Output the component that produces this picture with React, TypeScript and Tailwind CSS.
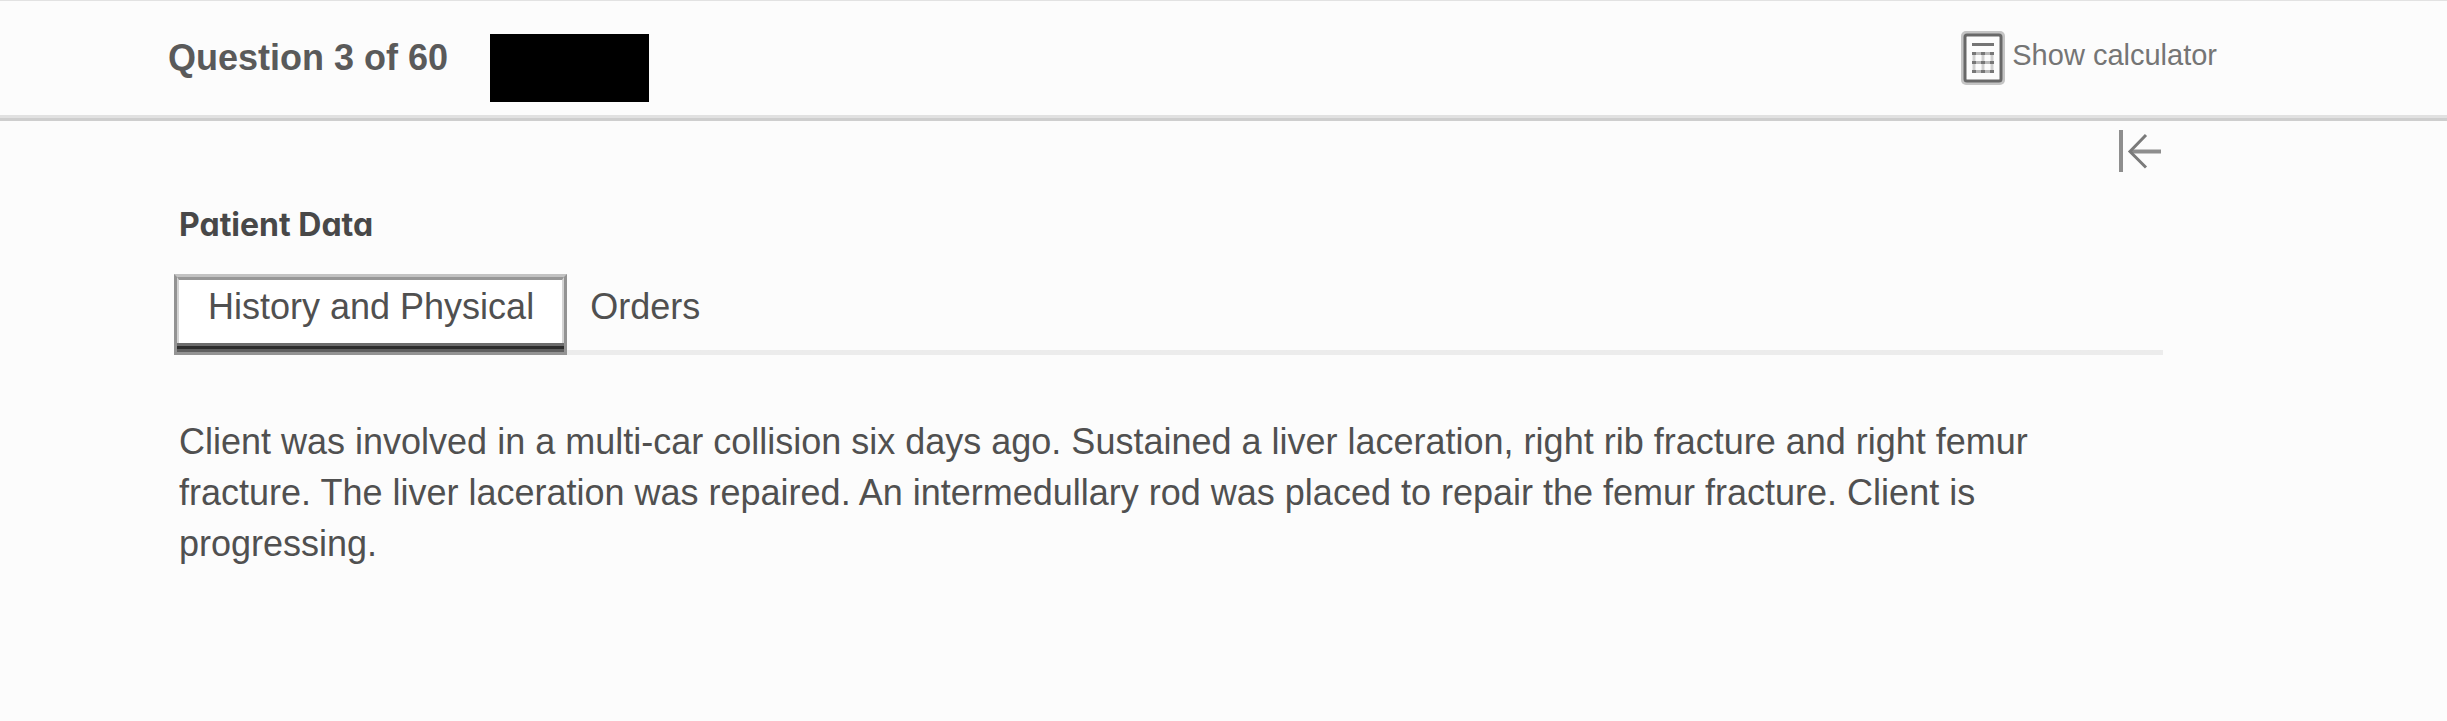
import React, { useState } from 'react';

const tabs = [
  {
    id: 'history',
    label: 'History and Physical',
    content:
      'Client was involved in a multi-car collision six days ago. Sustained a liver laceration, right rib fracture and right femur fracture. The liver laceration was repaired. An intermedullary rod was placed to repair the femur fracture. Client is progressing.',
  },
  { id: 'orders', label: 'Orders', content: '' },
];

const CalculatorIcon: React.FC = () => (
  <svg className="w-11 h-[54px]" viewBox="0 0 44 54" fill="none" aria-hidden="true">
    <rect x="0" y="0" width="44" height="54" rx="5" fill="#c4c4c4" />
    <rect x="4" y="4" width="36" height="46" rx="2" fill="#fcfcfc" stroke="#686868" strokeWidth="3" />
    <path d="M11 13.5h22" stroke="#757575" strokeWidth="3" />
    <path d="M13 21v21M22 21v21M31 21v21" stroke="#cfcfcf" strokeWidth="3" />
    <path d="M11 22.5h22M11 31.5h22M11 40.5h22" stroke="#b8b8b8" strokeWidth="3" />
    <path d="M11 22.5h4m5 0h4m5 0h4M11 31.5h4m5 0h4m5 0h4M11 40.5h4m5 0h4m5 0h4" stroke="#777" strokeWidth="3" />
  </svg>
);

const CollapseIcon: React.FC = () => (
  <svg className="w-[46px] h-11" viewBox="0 0 46 44" fill="none" aria-hidden="true">
    <path d="M4 1v42" stroke="#8e8e8e" strokeWidth="4" />
    <path d="M14 22.5h30" stroke="#8e8e8e" strokeWidth="4" />
    <path d="M29 6L13 22.5l16 16" stroke="#7a7a7a" strokeWidth="3" />
  </svg>
);

export default function App() {
  const [active, setActive] = useState('history');
  const current = tabs.find((tab) => tab.id === active);

  return (
    <div className="min-h-screen bg-[#fcfcfc] font-['Liberation_Sans',Arial,sans-serif] text-[#505050]">
      <header className="border-t border-[#e2e2e2]">
        <div className="flex items-start justify-between pl-[168px] pr-[230px] h-[114px]">
          <div className="flex items-start">
            <h1 className="pt-9 text-[36px] leading-[42px] font-bold text-[#5a5a5a]">Question 3 of 60</h1>
            <div className="mt-[33px] ml-[42px] w-[159px] h-[68px] bg-black" />
          </div>
          <button type="button" className="flex items-start gap-[7px] pt-[30px] text-[#757575]">
            <CalculatorIcon />
            <span className="pt-2 text-[29px] leading-8">Show calculator</span>
          </button>
        </div>
        <div className="h-[3px] bg-[#e1e1e1]" />
        <div className="h-[3px] bg-[#cecece]" />
      </header>

      <main className="pl-[174px] pr-[284px]">
        <div className="flex justify-end pt-2">
          <button type="button" aria-label="Collapse panel">
            <CollapseIcon />
          </button>
        </div>

        <h2 className="mt-8 pl-[5px] font-['Inter',sans-serif] text-[32px] leading-10 font-bold text-[#484848] [font-feature-settings:'cv11']">
          Patient Data
        </h2>

        <div role="tablist" className="mt-[29px] flex items-stretch h-[81px] bg-linear-to-t from-[#ececec] from-[5px] to-transparent to-[5px]">
          {tabs.map((tab) =>
            tab.id === active ? (
              <button
                key={tab.id}
                id={`tab-${tab.id}`}
                type="button"
                role="tab"
                aria-selected="true"
                className="flex flex-col border-3 border-[#939393] border-t-[#c2c2c2] bg-white text-[36px] leading-[42px]"
              >
                <span className="flex-1 border-x-2 border-t-3 border-x-[#d4d4d4] border-t-[#979797] pt-[6px] pl-[29px] pr-7">
                  {tab.label}
                </span>
                <span className="w-full h-[9px] border-t-3 border-b-3 border-t-[#6c6c6c] border-b-[#5f5f5f] bg-[#2c2c2c]" />
              </button>
            ) : (
              <button
                key={tab.id}
                id={`tab-${tab.id}`}
                type="button"
                role="tab"
                aria-selected="false"
                onClick={() => setActive(tab.id)}
                className="flex flex-col px-[23px] pt-3 text-[36px] leading-[42px]"
              >
                {tab.label}
              </button>
            )
          )}
        </div>

        <div role="tabpanel" aria-labelledby={`tab-${active}`} className="pt-[61px] pl-[5px]">
          <p className="text-[36px] leading-[51px]">{current?.content}</p>
        </div>
      </main>
    </div>
  );
}
